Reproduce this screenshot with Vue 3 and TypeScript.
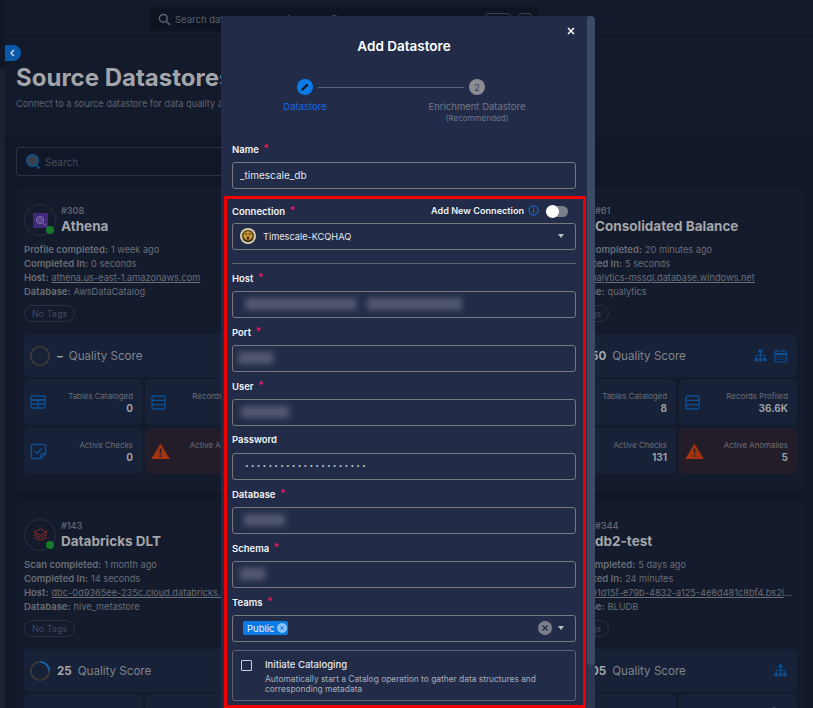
<script setup lang="ts">
interface Stat {
  label: string
  value: string
  icon: 'table' | 'rows' | 'check' | 'warn'
}

interface Card {
  id: string
  name: string
  side: 'left' | 'right'
  logo: 'athena' | 'stack' | 'none'
  lines: { key: string; value: string; link?: boolean }[]
  score: string
  progress: number
  calendar: boolean
  stats: Stat[]
}

const makeStats = (tables: string, records: string, checks: string, anomalies: string): Stat[] => [
  { label: 'Tables Cataloged', value: tables, icon: 'table' },
  { label: 'Records Profiled', value: records, icon: 'rows' },
  { label: 'Active Checks', value: checks, icon: 'check' },
  { label: 'Active Anomalies', value: anomalies, icon: 'warn' }
]

const cards: Card[] = [
  {
    id: '#308',
    name: 'Athena',
    side: 'left',
    logo: 'athena',
    lines: [
      { key: 'Profile completed', value: '1 week ago' },
      { key: 'Completed In', value: '0 seconds' },
      { key: 'Host', value: 'athena.us-east-1.amazonaws.com', link: true },
      { key: 'Database', value: 'AwsDataCatalog' }
    ],
    score: '–',
    progress: 0,
    calendar: false,
    stats: makeStats('0', '0', '0', '0')
  },
  {
    id: '#61',
    name: 'Consolidated Balance',
    side: 'right',
    logo: 'none',
    lines: [
      { key: 'Profile completed', value: '20 minutes ago' },
      { key: 'Completed In', value: '5 seconds' },
      { key: 'Host', value: 'qualytics-mssql.database.windows.net', link: true },
      { key: 'Database', value: 'qualytics' }
    ],
    score: '50',
    progress: 50,
    calendar: true,
    stats: makeStats('8', '36.6K', '131', '5')
  },
  {
    id: '#143',
    name: 'Databricks DLT',
    side: 'left',
    logo: 'stack',
    lines: [
      { key: 'Scan completed', value: '1 month ago' },
      { key: 'Completed In', value: '14 seconds' },
      { key: 'Host', value: 'dbc-0d9365ee-235c.cloud.databricks.com', link: true },
      { key: 'Database', value: 'hive_metastore' }
    ],
    score: '25',
    progress: 25,
    calendar: false,
    stats: makeStats('0', '0', '0', '0')
  },
  {
    id: '#344',
    name: 'db2-test',
    side: 'right',
    logo: 'none',
    lines: [
      { key: 'Scan completed', value: '5 days ago' },
      { key: 'Completed In', value: '24 minutes' },
      { key: 'Host', value: 'b01d15f-e79b-4832-a125-4e8d481c8bf4.bs2ipa7s.databases.appdomain.cloud', link: true },
      { key: 'Database', value: 'BLUDB' }
    ],
    score: '05',
    progress: 5,
    calendar: false,
    stats: makeStats('0', '0', '0', '0')
  }
]

const ringDash = (progress: number) => `${(progress / 100) * 62.8} 62.8`

const fields = [
  { label: 'Host', required: true, blurs: [{ gap: 5, width: 112 }, { gap: 10, width: 95 }] },
  { label: 'Port', required: true, blurs: [{ gap: -2, width: 35 }] },
  { label: 'User', required: true, blurs: [{ gap: 1, width: 48 }] },
  { label: 'Password', required: false, dots: '•••••••••••••••••••••', blurs: [] },
  { label: 'Database', required: true, blurs: [{ gap: 4, width: 41 }] },
  { label: 'Schema', required: true, blurs: [{ gap: 0, width: 25 }] }
]
</script>

<template>
  <div class="screen">
    <aside class="rail"></aside>

    <main class="page">
      <header class="topbar">
        <div class="global-search">
          <svg width="13" height="13" viewBox="0 0 14 14" fill="none" stroke="#5d626d" stroke-width="1.6">
            <circle cx="5.7" cy="5.7" r="4.2" />
            <path d="M9 9l4 4" />
          </svg>
          <span>Search datastores, containers and fields</span>
          <kbd class="key key-ctrl">CTRL</kbd>
          <kbd class="key">K</kbd>
        </div>
      </header>

      <button class="collapse" type="button">
        <svg width="7" height="8" viewBox="0 0 7 8" fill="none" stroke="#c9d3e2" stroke-width="1.5">
          <path d="M5 1L2 4l3 3" />
        </svg>
      </button>

      <section class="intro">
        <h1>Source Datastores</h1>
        <p>Connect to a source datastore for data quality analysis, monitoring, and anomaly detection</p>
      </section>

      <section class="content">
        <div class="list-search">
          <svg width="16" height="17" viewBox="0 0 16 17" fill="none">
            <circle cx="7.5" cy="7.5" r="5.6" fill="#3a404c" stroke="#14507f" stroke-width="2" />
            <path d="M11 12l3.5 3.5" stroke="#14507f" stroke-width="1.8" />
          </svg>
          <span>Search</span>
        </div>

        <div class="card-grid">
          <article v-for="card in cards" :key="card.id" class="card" :class="card.side">
            <div class="card-head">
              <div class="avatar">
                <svg v-if="card.logo === 'athena'" width="15" height="15" viewBox="0 0 15 15">
                  <rect width="15" height="15" fill="#3f2a78" />
                  <circle cx="7" cy="7" r="3.6" fill="none" stroke="#8c78b8" stroke-width="1" />
                  <circle cx="7" cy="7" r="1.6" fill="none" stroke="#8c78b8" stroke-width=".8" />
                  <path d="M9.6 9.6l3 3" stroke="#8c78b8" stroke-width="1" />
                </svg>
                <svg v-else-if="card.logo === 'stack'" width="15" height="14" viewBox="0 0 15 14" fill="none" stroke="#8c2a26" stroke-width="1">
                  <path d="M7.5 1L14 4.2 7.5 7.4 1 4.2z" />
                  <path d="M1 6.6l6.5 3.2L14 6.6" />
                  <path d="M1 9.3l6.5 3.2L14 9.3" />
                </svg>
                <i class="status"></i>
              </div>
              <div>
                <div class="card-id">{{ card.id }}</div>
                <h2>{{ card.name }}</h2>
              </div>
            </div>

            <div class="meta">
              <div v-for="line in card.lines" :key="line.key" class="meta-line">
                <b>{{ line.key }}:</b>
                <span :class="{ link: line.link }">{{ line.value }}</span>
              </div>
            </div>

            <div class="tag">No Tags</div>

            <div class="score">
              <svg class="ring" width="22" height="22" viewBox="0 0 24 24" fill="none">
                <circle cx="12" cy="12" r="10" stroke="#3b3a38" stroke-width="2" />
                <circle
                  cx="12"
                  cy="12"
                  r="10"
                  stroke="#1c5fa8"
                  stroke-width="2"
                  transform="rotate(-90 12 12)"
                  :stroke-dasharray="ringDash(card.progress)"
                />
              </svg>
              <strong>{{ card.score }}</strong>
              <span>Quality Score</span>
              <div class="score-icons">
                <svg width="13" height="13" viewBox="0 0 13 13" fill="#0b4f94">
                  <rect x="4.5" y="0.5" width="4" height="3.2" />
                  <rect x="0.5" y="9" width="3.4" height="3.4" />
                  <rect x="4.8" y="9" width="3.4" height="3.4" />
                  <rect x="9.1" y="9" width="3.4" height="3.4" />
                  <path d="M6 3.7h1v2h4.3V9h-1V6.7H7V9H6V6.7H2.7V9h-1V5.7H6z" />
                </svg>
                <svg v-if="card.calendar" width="13" height="14" viewBox="0 0 13 14" fill="none" stroke="#0b4f94" stroke-width="1.2">
                  <rect x="0.8" y="2" width="11.4" height="11" rx="1" />
                  <path d="M0.8 5h11.4" stroke-width="2" />
                  <path d="M3.5 0.5v2M9.5 0.5v2" />
                  <path d="M3 7.5h1.5M5.8 7.5h1.5M8.6 7.5h1.5M3 10.2h1.5M5.8 10.2h1.5M8.6 10.2h1.5" />
                </svg>
              </div>
            </div>

            <div class="stats">
              <div v-for="stat in card.stats" :key="stat.label" class="stat" :class="{ danger: stat.icon === 'warn' }">
                <svg v-if="stat.icon === 'table'" width="16" height="14" viewBox="0 0 16 14" fill="none" stroke="#0b4f94" stroke-width="1.4">
                  <rect x="1" y="1" width="14" height="12" rx="1" />
                  <path d="M1 5h14" stroke-width="2" />
                  <path d="M1 9h14M8 5v8" />
                </svg>
                <svg v-else-if="stat.icon === 'rows'" width="15" height="15" viewBox="0 0 15 15" fill="none" stroke="#0b4f94" stroke-width="1.4">
                  <rect x="1" y="1" width="13" height="13" rx="1.5" />
                  <path d="M1 5.4h13M1 9.6h13" />
                </svg>
                <svg v-else-if="stat.icon === 'check'" width="17" height="17" viewBox="0 0 17 17" fill="none" stroke="#0b4f94" stroke-width="1.5">
                  <path d="M11 15.5H3a1.6 1.6 0 0 1-1.6-1.6V3A1.6 1.6 0 0 1 3 1.4h11A1.6 1.6 0 0 1 15.6 3v7.8z" />
                  <path d="M11 15.5v-3.4a1.3 1.3 0 0 1 1.3-1.3h3.3" />
                  <path d="M5 8l2.3 2.2L11.8 5.6" />
                </svg>
                <svg v-else width="19" height="16" viewBox="0 0 19 16">
                  <path d="M9.5 0.5L18.8 16H0.2z" fill="#a2330f" />
                  <path d="M8.6 5.5h1.8l-.3 5.3H8.9z" fill="#241d28" />
                  <circle cx="9.5" cy="13" r="1" fill="#241d28" />
                </svg>
                <div class="stat-text">
                  <span>{{ stat.label }}</span>
                  <strong>{{ stat.value }}</strong>
                </div>
              </div>
            </div>
          </article>
        </div>
      </section>
    </main>

    <div class="modal">
      <div class="modal-body">
        <h3>Add Datastore</h3>
        <button class="close" type="button">
          <svg width="8" height="8" viewBox="0 0 8 8" stroke="#fff" stroke-width="1.5">
            <path d="M1 1l6 6M7 1L1 7" />
          </svg>
        </button>

        <div class="stepper">
          <span class="step-dot active">
            <svg width="10" height="10" viewBox="0 0 10 10" fill="#0c1220">
              <path d="M1.5 7L6.8 1.7 8.3 3.2 3 8.5 1.2 8.8z" />
            </svg>
          </span>
          <span class="step-line"></span>
          <span class="step-dot">2</span>
        </div>
        <div class="step-labels">
          <div class="step-current">Datastore</div>
          <div>
            Enrichment Datastore
            <small>(Recommended)</small>
          </div>
        </div>

        <div class="field name-field">
          <label>Name <em>*</em></label>
          <div class="input">_timescale_db</div>
        </div>

        <div class="highlight">
          <div class="connection-row">
            <label>Connection <em>*</em></label>
            <div class="new-connection">
              <span>Add New Connection</span>
              <svg width="11" height="11" viewBox="0 0 11 11" fill="none" stroke="#1f72e0">
                <circle cx="5.5" cy="5.5" r="4.6" />
                <path d="M5.5 4.6v3.4M5.5 2.6v1" />
              </svg>
              <span class="toggle"><i></i></span>
            </div>
          </div>
          <div class="input select">
            <svg class="tiger" width="16" height="16" viewBox="0 0 16 16">
              <circle cx="8" cy="8" r="8" fill="#d8d0b4" />
              <circle cx="8" cy="8" r="6.2" fill="#6b5326" />
              <circle cx="8" cy="7.6" r="4.2" fill="#d19a2e" />
              <path d="M5.4 5.6h1.8v1.2H5.4zM8.8 5.6h1.8v1.2H8.8zM7 8.6h2v2.6H7z" fill="#30240f" />
              <path d="M3.2 11.5Q8 15 12.8 11.5" stroke="#30240f" fill="none" />
            </svg>
            <span class="conn-name">Timescale-KCQHAQ</span>
            <i class="caret"></i>
          </div>

          <hr />

          <div v-for="field in fields" :key="field.label" class="field">
            <label>{{ field.label }} <em v-if="field.required">*</em></label>
            <div class="input">
              <span v-if="field.dots" class="dots">{{ field.dots }}</span>
              <span
                v-for="(blur, i) in field.blurs"
                :key="i"
                class="blurred"
                :style="{ width: blur.width + 'px', marginLeft: blur.gap + 'px' }"
              ></span>
            </div>
          </div>

          <div class="field">
            <label>Teams <em>*</em></label>
            <div class="input teams">
              <span class="chip">
                Public
                <svg width="10" height="10" viewBox="0 0 10 10">
                  <circle cx="5" cy="5" r="5" fill="#8cc4f8" />
                  <path d="M3.2 3.2l3.6 3.6M6.8 3.2L3.2 6.8" stroke="#0a7ae6" stroke-width="1" />
                </svg>
              </span>
              <svg class="clear" width="14" height="14" viewBox="0 0 14 14">
                <circle cx="7" cy="7" r="7" fill="#7b7f8b" />
                <path d="M4.5 4.5l5 5M9.5 4.5l-5 5" stroke="#222c48" stroke-width="1.3" />
              </svg>
              <i class="caret near"></i>
            </div>
          </div>

          <div class="catalog">
            <span class="checkbox"></span>
            <div>
              <div class="catalog-title">Initiate Cataloging</div>
              <p>Automatically start a Catalog operation to gather data structures and corresponding metadata</p>
            </div>
          </div>
        </div>
      </div>
      <div class="scrollbar"><div class="thumb"></div></div>
    </div>
  </div>
</template>

<style>
html,
body {
  margin: 0;
  background: #10182a;
}
</style>

<style scoped>
.screen {
  position: relative;
  display: flex;
  width: 813px;
  height: 708px;
  overflow: hidden;
  background: #0f1728;
  font-family: Inter, "Noto Sans", sans-serif;
  color: #8f9299;
}

.rail {
  flex: none;
  width: 5px;
  margin-top: 69px;
  background: #1a2130;
}

.page {
  position: relative;
  flex: 1;
  min-width: 0;
}

.topbar {
  height: 37px;
  box-sizing: border-box;
  padding: 7px 0 0 145px;
  background: #121a2b;
  border-bottom: 1px solid #0f1626;
}

.global-search {
  display: flex;
  align-items: center;
  width: 388px;
  height: 24px;
  box-sizing: border-box;
  padding: 0 6px 0 8px;
  gap: 4px;
  border-radius: 3px;
  background: #0d1422;
  font-size: 9.5px;
  color: #5d626d;
}

.key {
  margin-left: 4px;
  padding: 1px 3px;
  border: 1px solid #3a404c;
  border-radius: 3px;
  font: 7px Inter, sans-serif;
}

.key-ctrl {
  margin-left: auto;
}

.collapse {
  position: absolute;
  left: 0;
  top: 45px;
  width: 16px;
  height: 16px;
  padding: 0 2px 0 0;
  border: 0;
  border-radius: 0 8px 8px 0;
  background: #0a58a8;
  display: flex;
  align-items: center;
  justify-content: center;
}

.intro {
  height: 100px;
  box-sizing: border-box;
  padding: 27px 0 0 11px;
  background: #121a2b;
  overflow: hidden;
}

.intro h1 {
  margin: 0;
  font-size: 24px;
  line-height: 28px;
  font-weight: 700;
  color: #a3a5a9;
  white-space: nowrap;
}

.intro p {
  margin: 5px 0 0;
  font-size: 9.2px;
  line-height: 14px;
  color: #5f636d;
  white-space: nowrap;
}

.content {
  padding: 10px 8px 0 11px;
}

.list-search {
  display: flex;
  align-items: center;
  gap: 4px;
  width: 522px;
  height: 29px;
  box-sizing: border-box;
  padding: 0 8px;
  border: 1px solid #2a3140;
  border-radius: 3px;
  font-size: 10px;
  color: #484d58;
}

.card-grid {
  display: grid;
  grid-template-columns: repeat(3, 255px);
  column-gap: 12px;
  row-gap: 11px;
  margin-top: 11px;
}

.card {
  grid-column: 1;
  box-sizing: border-box;
  height: 304px;
  padding: 17px 8px 0;
  border-radius: 6px;
  background: #141b2d;
  min-width: 0;
}

.card.right {
  grid-column: 3;
}

.card-head {
  display: flex;
  align-items: center;
  gap: 5px;
}

.avatar {
  position: relative;
  display: flex;
  align-items: center;
  justify-content: center;
  flex: none;
  width: 32px;
  height: 32px;
  box-sizing: border-box;
  border: 1px solid #293040;
  border-radius: 50%;
}

.status {
  position: absolute;
  right: 1px;
  bottom: 1px;
  width: 8px;
  height: 8px;
  border-radius: 50%;
  background: #157a2c;
}

.card-id {
  font-size: 9px;
  line-height: 11px;
  font-weight: 600;
  color: #5f636d;
}

.card-head h2 {
  margin: 2px 0 0;
  font-size: 13.5px;
  line-height: 17px;
  font-weight: 700;
  color: #a3a5a9;
  white-space: nowrap;
}

.meta {
  margin-top: 7px;
}

.meta-line {
  height: 14px;
  font-size: 9.2px;
  line-height: 14px;
  color: #6a6e77;
  white-space: nowrap;
  overflow: hidden;
  text-overflow: ellipsis;
}

.meta-line b {
  margin-right: 3px;
  font-size: 9.5px;
  font-weight: 600;
}

.link {
  text-decoration: underline;
}

.tag {
  width: fit-content;
  margin-top: 6px;
  padding: 0 7px;
  height: 17px;
  box-sizing: border-box;
  border: 1px solid #2a3140;
  border-radius: 9px;
  font-size: 9px;
  line-height: 15px;
  color: #3e4a63;
}

.score {
  display: flex;
  align-items: center;
  height: 43px;
  margin-top: 12px;
  box-sizing: border-box;
  padding: 0 10px 0 5px;
  border-radius: 5px;
  background: #172138;
  font-size: 11.6px;
  color: #80848c;
}

.ring {
  flex: none;
}

.score strong {
  margin: 0 6px 0 6px;
  color: #a3a5a9;
  font-weight: 700;
}

.score-icons {
  display: flex;
  align-items: center;
  gap: 7px;
  margin-left: auto;
}

.stats {
  display: grid;
  grid-template-columns: 118px 118px;
  grid-auto-rows: 46px;
  gap: 3px;
  margin-top: 2px;
}

.stat {
  display: flex;
  align-items: center;
  justify-content: space-between;
  padding: 0 9px 0 6px;
  border-radius: 5px;
  background: #172138;
}

.stat.danger {
  background: #231d29;
}

.stat-text {
  display: flex;
  flex-direction: column;
  align-items: flex-end;
  gap: 1px;
  font-size: 7.9px;
  line-height: 10px;
  color: #6a6e77;
}

.stat-text strong {
  font-size: 10px;
  line-height: 12px;
  color: #9a9da3;
}

.modal {
  position: absolute;
  left: 221px;
  top: 16px;
  display: flex;
  width: 374px;
  height: 692px;
  background: #222c48;
  border-radius: 4px 4px 0 0;
  overflow: hidden;
}

.modal-body {
  position: relative;
  flex: 1;
  min-width: 0;
  box-sizing: border-box;
  padding: 21px 11px 0;
}

.modal-body h3 {
  margin: 0;
  font-size: 13.5px;
  line-height: 18px;
  font-weight: 600;
  text-align: center;
  color: #fff;
}

.close {
  position: absolute;
  top: 11px;
  right: 12px;
  display: flex;
  padding: 0;
  border: 0;
  background: none;
}

.stepper {
  display: flex;
  align-items: center;
  width: 188px;
  margin: 24px 0 0 65px;
}

.step-dot {
  display: flex;
  align-items: center;
  justify-content: center;
  flex: none;
  width: 16px;
  height: 16px;
  border-radius: 50%;
  background: #8a8c92;
  color: #3a3f4c;
  font-size: 9.5px;
}

.step-dot.active {
  background: #0a7ae6;
}

.step-line {
  flex: 1;
  height: 1px;
  margin: 0 5px;
  background: #5d6478;
}

.step-labels {
  display: grid;
  grid-template-columns: 172px 172px;
  margin: 5px 0 0 -13px;
  font-size: 9.5px;
  line-height: 13px;
  text-align: center;
  color: #6f7688;
}

.step-current {
  color: #1468e0;
}

.step-labels small {
  display: block;
  font-size: 8px;
  line-height: 10px;
}

.field {
  margin-top: 7px;
}

.name-field {
  margin-top: 19px;
  margin-bottom: 7px;
}

label {
  display: block;
  height: 14px;
  font-size: 9.5px;
  line-height: 14px;
  font-weight: 600;
  color: #f2f4f8;
}

label em {
  position: relative;
  top: -1px;
  margin-left: 2px;
  font-style: normal;
  font-size: 10px;
  font-weight: 700;
  color: #e6195f;
}

.input {
  display: flex;
  align-items: center;
  height: 27px;
  box-sizing: border-box;
  margin-top: 6px;
  padding: 0 7px 1px;
  border: 1px solid #77797f;
  border-radius: 3px;
  font-size: 10px;
  color: #e3e6ec;
  overflow: hidden;
}

.highlight {
  margin: 0 -10px 0 -8px;
  padding: 5px 7px 4px 5px;
  border: 3px solid #f00000;
}

.connection-row {
  display: flex;
  justify-content: space-between;
}

.new-connection {
  display: flex;
  align-items: center;
  gap: 4px;
  height: 13px;
  font-size: 9.1px;
  font-weight: 600;
  color: #eef0f4;
}

.toggle {
  position: relative;
  width: 22px;
  height: 11px;
  margin: 1px 8px 0 3px;
  border-radius: 6px;
  background: #7b7f8b;
}

.toggle i {
  position: absolute;
  left: 0;
  top: -1px;
  width: 13px;
  height: 13px;
  border-radius: 50%;
  background: #fff;
}

.select {
  margin-top: 5px;
}

.conn-name {
  font-size: 9.2px;
}

.tiger {
  margin-right: 7px;
}

.caret {
  width: 0;
  height: 0;
  margin-left: auto;
  margin-right: 4px;
  border-left: 3.5px solid transparent;
  border-right: 3.5px solid transparent;
  border-top: 4px solid #b9c0cc;
}

.caret.near {
  margin-left: 6px;
}

hr {
  height: 1px;
  margin: 13px 0 0;
  border: 0;
  background: #5f636e;
}

.blurred {
  flex: none;
  height: 12px;
  background: #545a70;
  filter: blur(3px);
}

.dots {
  margin-left: 5px;
  font-size: 6.5px;
  letter-spacing: 2.2px;
  color: #b5b9c3;
}

.chip {
  display: flex;
  align-items: center;
  gap: 2px;
  height: 14px;
  margin-left: 3px;
  padding: 0 1px 0 4px;
  border-radius: 2px;
  background: #0a7ae6;
  font-size: 9.5px;
  color: #e8f2fd;
}

.clear {
  margin-left: auto;
}

.catalog {
  display: flex;
  gap: 13px;
  margin-top: 8px;
  height: 51px;
  box-sizing: border-box;
  padding: 7px 8px 0;
  border: 1px solid #5f636e;
  border-radius: 3px;
}

.checkbox {
  flex: none;
  width: 11px;
  height: 11px;
  margin-top: 2px;
  box-sizing: border-box;
  border: 1px solid #d0d3da;
  border-radius: 1px;
}

.catalog-title {
  font-size: 9.5px;
  line-height: 13px;
  font-weight: 500;
  color: #e3e6ec;
}

.catalog p {
  margin: 3px 0 0;
  font-size: 8.4px;
  line-height: 10px;
  color: #a7aebc;
}

.scrollbar {
  flex: none;
  width: 8px;
  background: #2d3852;
}

.thumb {
  height: 649px;
  border-radius: 4px;
  background: #3d4a63;
}
</style>
